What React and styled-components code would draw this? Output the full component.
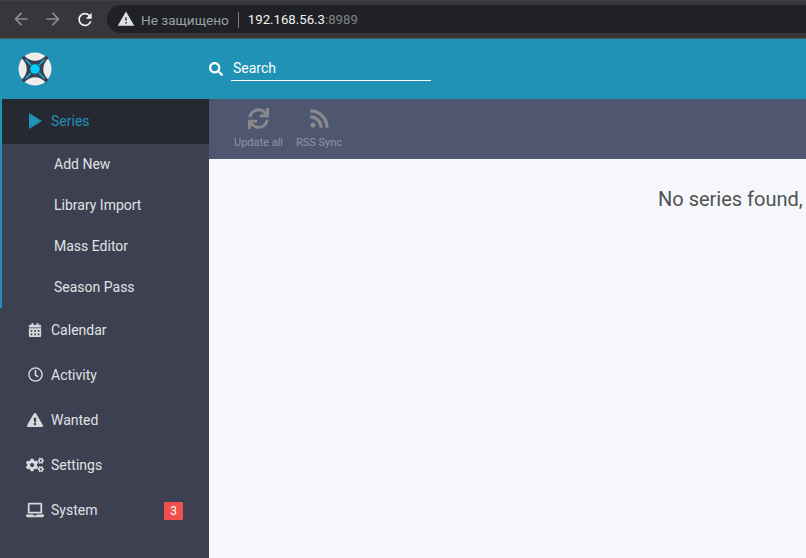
import React from "react";
import styled, { createGlobalStyle } from "styled-components";
import { FaSync, FaRss, FaCalendarAlt, FaRegClock, FaExclamationTriangle, FaCogs, FaLaptop, FaSearch } from "react-icons/fa";
import { MdArrowBack, MdArrowForward, MdRefresh, MdWarning } from "react-icons/md";

const Global = createGlobalStyle`
  html, body { margin: 0; padding: 0; width: 806px; height: 558px; overflow: hidden; background: #f5f7fa; }
  * { box-sizing: border-box; }
  #root { height: 558px; }
`;

const Page = styled.div`
  display: flex;
  flex-direction: column;
  height: 558px;
  font-family: Roboto, "Liberation Sans", sans-serif;
`;

const Chrome = styled.div`
  height: 39px;
  flex: none;
  display: flex;
  align-items: center;
  padding: 0 0 1px 11px;
  background: #36373a;
  border-top: 1px solid #414245;
  border-bottom: 1px solid #57585a;
`;

const NavBtn = styled.span`
  display: flex;
  width: 20px;
  margin-right: 12px;
  font-size: 20px;
  color: ${(p) => (p.$on ? "#f1f3f4" : "#8a8c8f")};
`;

const Reload = styled(NavBtn)`
  font-size: 21px;
`;

const Omnibox = styled.div`
  flex: 1;
  height: 28px;
  display: flex;
  align-items: center;
  padding: 1px 0 0 10px;
  background: #202124;
  border-radius: 14px 0 0 14px;
  font-family: Roboto, "Liberation Sans", sans-serif;
  white-space: nowrap;
`;

const Warn = styled.span`
  display: flex;
  margin: -1px 6px 0 0;
  font-size: 18px;
  color: #dfe1e3;
`;

const Insecure = styled.span`
  color: #9aa0a6;
  font-size: 13.6px;
`;

const Divider = styled.span`
  width: 1px;
  height: 16px;
  margin: 0 9px 0 9px;
  background: #7a7d80;
`;

const Host = styled.span`
  color: #f1f3f4;
  font-size: 13.2px;
`;

const Port = styled.span`
  color: #80868b;
  font-size: 13.2px;
`;

const Header = styled.header`
  height: 60px;
  flex: none;
  display: flex;
  align-items: center;
  background: #1f92b6;
`;

const LogoBox = styled.div`
  width: 209px;
  flex: none;
  display: flex;
  padding-left: 18px;
`;

const Search = styled.div`
  display: flex;
  align-items: center;
  color: #fff;
`;

const SearchIcon = styled(FaSearch)`
  font-size: 14px;
  margin-right: 8px;
`;

const SearchBox = styled.div`
  width: 200px;
  height: 24px;
  padding: 3px 0 0 2px;
  border-bottom: 1px solid #fff;
  font-size: 14px;
  font-weight: 400;
  line-height: 17px;
`;

const Body = styled.div`
  flex: 1;
  display: flex;
  min-height: 0;
`;

const Sidebar = styled.nav`
  width: 209px;
  flex: none;
  background: #3c4051;
`;

const ActiveGroup = styled.div`
  border-left: 2px solid #1f92b6;
`;

const ActiveRow = styled.div`
  height: 45px;
  display: flex;
  align-items: center;
  padding: 0 0 2px 27px;
  background: #262832;
  color: #1f92b6;
  font-size: 14px;
`;

const PlayIcon = styled.svg`
  width: 13px;
  height: 16px;
  flex: none;
  margin-right: 9px;
  fill: #1f92b6;
`;

const SubRow = styled.div`
  height: 41px;
  display: flex;
  align-items: center;
  padding: 0 0 2px 52px;
  color: #e1e2e3;
  font-size: 14px;
`;

const NavRow = styled.div`
  height: 45px;
  display: flex;
  align-items: center;
  padding-bottom: 2px;
  color: #e1e2e3;
  font-size: 14px;
`;

const NavIcon = styled.span`
  width: 51px;
  flex: none;
  display: flex;
  justify-content: center;
  padding: 0 5px 0 24px;
  font-size: ${(p) => p.$size}px;
  color: #d8d9dc;
`;

const NavLabel = styled.span`
  flex: 1;
`;

const Badge = styled.span`
  width: 19px;
  height: 18px;
  margin: 2px 26px 0 0;
  display: flex;
  align-items: center;
  justify-content: center;
  background: #f05050;
  border-radius: 1px;
  color: #fff;
  font-size: 12px;
`;

const Main = styled.main`
  flex: 1;
  min-width: 0;
  display: flex;
  flex-direction: column;
`;

const Toolbar = styled.div`
  height: 60px;
  flex: none;
  display: flex;
  padding-left: 19px;
  background: #4f566f;
`;

const ToolButton = styled.div`
  width: ${(p) => p.$w}px;
  display: flex;
  flex-direction: column;
  align-items: center;
  padding-top: 8px;
  color: #8f95a9;
  font-size: 11px;
  white-space: nowrap;
`;

const ToolIcon = styled.span`
  height: 22px;
  display: flex;
  align-items: center;
  margin-bottom: 7px;
  font-size: 21px;
  color: #8a8a8c;
`;

const Content = styled.div`
  flex: 1;
  padding: 28px 0 0 449px;
  background: #f5f7fa;
  overflow: hidden;
`;

const Message = styled.div`
  color: #515253;
  font-size: 20px;
  line-height: 24px;
  white-space: nowrap;
`;

const Logo = () => (
  <svg width="34" height="34" viewBox="0 0 34 34">
    <circle cx="17" cy="17" r="16.5" fill="#eeeeee" />
    <path
      d="M3.5 6 L6 3.5 Q17 14 28 3.5 L30.5 6 Q20 17 30.5 28 L28 30.5 Q17 20 6 30.5 L3.5 28 Q14 17 3.5 6 Z"
      fill="#3a3f51"
    />
    <path d="M7.5 7.5 L13 13 M26.5 7.5 L21 13 M7.5 26.5 L13 21 M26.5 26.5 L21 21" stroke="#00ccff" strokeWidth="1.1" />
    <circle cx="17" cy="17" r="4.8" fill="#00ccff" />
  </svg>
);

const subs = ["Add New", "Library Import", "Mass Editor", "Season Pass"];
const nav = [
  { label: "Calendar", icon: <FaCalendarAlt />, size: 14 },
  { label: "Activity", icon: <FaRegClock />, size: 15 },
  { label: "Wanted", icon: <FaExclamationTriangle />, size: 16 },
  { label: "Settings", icon: <FaCogs />, size: 18 },
  { label: "System", icon: <FaLaptop />, size: 18, badge: 3 },
];

export default function App() {
  return (
    <Page>
      <Global />
      <Chrome>
        <NavBtn><MdArrowBack /></NavBtn>
        <NavBtn><MdArrowForward /></NavBtn>
        <Reload $on><MdRefresh /></Reload>
        <Omnibox>
          <Warn><MdWarning /></Warn>
          <Insecure>Не защищено</Insecure>
          <Divider />
          <Host>192.168.56.3</Host>
          <Port>:8989</Port>
        </Omnibox>
      </Chrome>
      <Header>
        <LogoBox><Logo /></LogoBox>
        <Search>
          <SearchIcon />
          <SearchBox>Search</SearchBox>
        </Search>
      </Header>
      <Body>
        <Sidebar>
          <ActiveGroup>
            <ActiveRow>
              <PlayIcon viewBox="0 0 13 16"><path d="M0 0 L13 8 L0 16 Z" /></PlayIcon>
              Series
            </ActiveRow>
            {subs.map((s) => (
              <SubRow key={s}>{s}</SubRow>
            ))}
          </ActiveGroup>
          {nav.map((n) => (
            <NavRow key={n.label}>
              <NavIcon $size={n.size}>{n.icon}</NavIcon>
              <NavLabel>{n.label}</NavLabel>
              {n.badge ? <Badge>{n.badge}</Badge> : null}
            </NavRow>
          ))}
        </Sidebar>
        <Main>
          <Toolbar>
            <ToolButton $w={61}>
              <ToolIcon><FaSync /></ToolIcon>
              Update all
            </ToolButton>
            <ToolButton $w={60}>
              <ToolIcon><FaRss /></ToolIcon>
              RSS Sync
            </ToolButton>
          </Toolbar>
          <Content>
            <Message>No series found, to get started you'll want to import your series</Message>
          </Content>
        </Main>
      </Body>
    </Page>
  );
}
